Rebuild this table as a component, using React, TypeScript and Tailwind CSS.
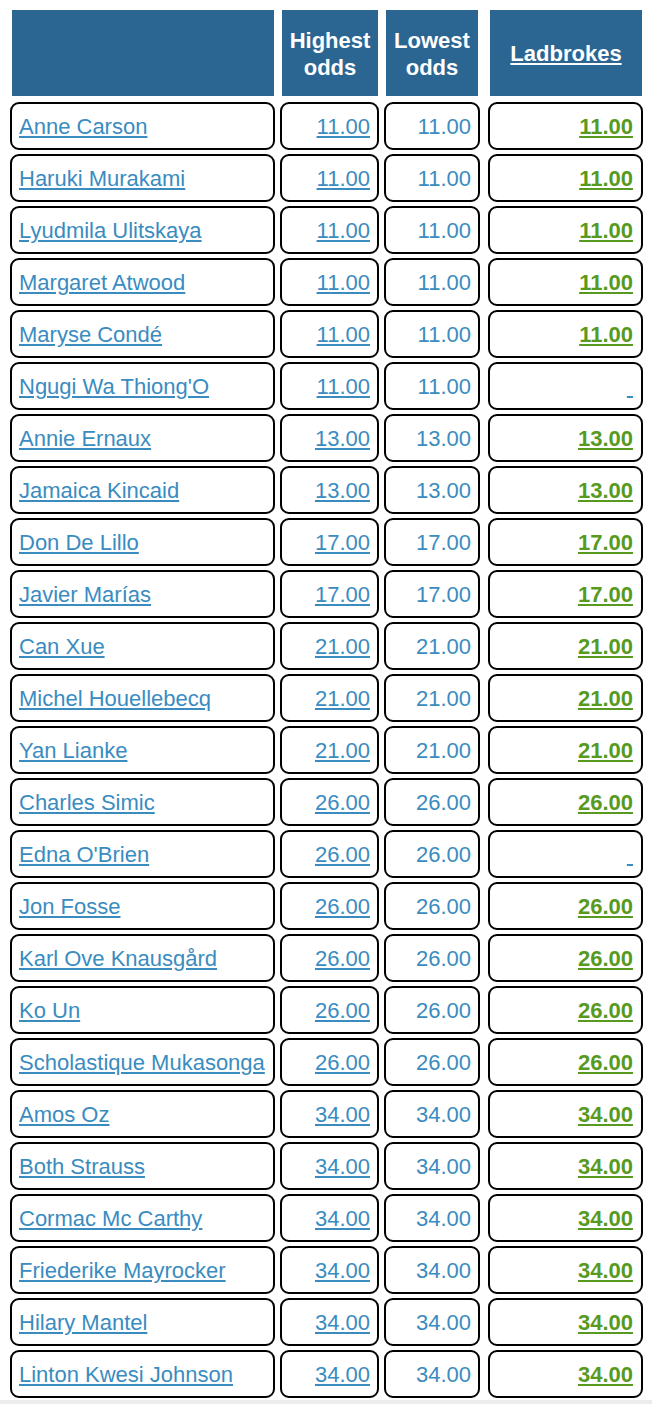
import React from 'react';

interface Row {
  name: string;
  odds: string;
  ladbrokes: boolean;
}

const rows: Row[] = [
  { name: 'Anne Carson', odds: '11.00', ladbrokes: true },
  { name: 'Haruki Murakami', odds: '11.00', ladbrokes: true },
  { name: 'Lyudmila Ulitskaya', odds: '11.00', ladbrokes: true },
  { name: 'Margaret Atwood', odds: '11.00', ladbrokes: true },
  { name: 'Maryse Condé', odds: '11.00', ladbrokes: true },
  { name: "Ngugi Wa Thiong'O", odds: '11.00', ladbrokes: false },
  { name: 'Annie Ernaux', odds: '13.00', ladbrokes: true },
  { name: 'Jamaica Kincaid', odds: '13.00', ladbrokes: true },
  { name: 'Don De Lillo', odds: '17.00', ladbrokes: true },
  { name: 'Javier Marías', odds: '17.00', ladbrokes: true },
  { name: 'Can Xue', odds: '21.00', ladbrokes: true },
  { name: 'Michel Houellebecq', odds: '21.00', ladbrokes: true },
  { name: 'Yan Lianke', odds: '21.00', ladbrokes: true },
  { name: 'Charles Simic', odds: '26.00', ladbrokes: true },
  { name: "Edna O'Brien", odds: '26.00', ladbrokes: false },
  { name: 'Jon Fosse', odds: '26.00', ladbrokes: true },
  { name: 'Karl Ove Knausgård', odds: '26.00', ladbrokes: true },
  { name: 'Ko Un', odds: '26.00', ladbrokes: true },
  { name: 'Scholastique Mukasonga', odds: '26.00', ladbrokes: true },
  { name: 'Amos Oz', odds: '34.00', ladbrokes: true },
  { name: 'Both Strauss', odds: '34.00', ladbrokes: true },
  { name: 'Cormac Mc Carthy', odds: '34.00', ladbrokes: true },
  { name: 'Friederike Mayrocker', odds: '34.00', ladbrokes: true },
  { name: 'Hilary Mantel', odds: '34.00', ladbrokes: true },
  { name: 'Linton Kwesi Johnson', odds: '34.00', ladbrokes: true },
];

const cell = 'h-[48px] flex items-center border-2 border-black rounded-[9px] px-[7px] whitespace-nowrap';

export default function App() {
  return (
    <div className="bg-white text-[22px] font-['Liberation_Sans',Arial,sans-serif] min-h-[1404px]">
      <div className="pt-[10px] pl-[10px]">
        <div className="grid grid-cols-[265px_99px_96px_158px] gap-x-[5px] gap-y-[4px]">
          {/* Header */}
          <div className="ml-[2px] mr-[1px] h-[86px] mb-[2px] bg-[#2b6693]" />
          <div className="ml-[2px] mr-[1px] h-[86px] bg-[#2b6693] flex flex-col items-center justify-center text-white font-bold leading-[27px] pt-[1px]">
            <span>Highest</span>
            <span>odds</span>
          </div>
          <div className="ml-[2px] mr-[2px] h-[86px] bg-[#2b6693] flex flex-col items-center justify-center text-white font-bold leading-[27px] pt-[1px]">
            <span>Lowest</span>
            <span>odds</span>
          </div>
          <div className="ml-[5px] mr-[1px] h-[86px] bg-[#2b6693] flex items-center justify-center text-white font-bold">
            <span className="underline">Ladbrokes</span>
          </div>

          {/* Rows */}
          {rows.map((r) => (
            <React.Fragment key={r.name}>
              <div className={cell}>
                <span className="text-[#3a8cc0] underline">{r.name}</span>
              </div>
              <div className={cell + ' justify-end'}>
                <span className="text-[#3a8cc0] underline">{r.odds}</span>
              </div>
              <div className={cell + ' justify-end'}>
                <span className="text-[#3a8cc0]">{r.odds}</span>
              </div>
              <div className={cell + ' justify-end ml-[3px] pr-[8px]'}>
                {r.ladbrokes ? (
                  <span className="text-[#579a1f] font-bold underline">{r.odds}</span>
                ) : (
                  <span className="text-[#3a8cc0] underline">{'\u00a0'}</span>
                )}
              </div>
            </React.Fragment>
          ))}
        </div>
      </div>
      <div className="mt-[2px] h-[10px] bg-[#ececec]" />
    </div>
  );
}
